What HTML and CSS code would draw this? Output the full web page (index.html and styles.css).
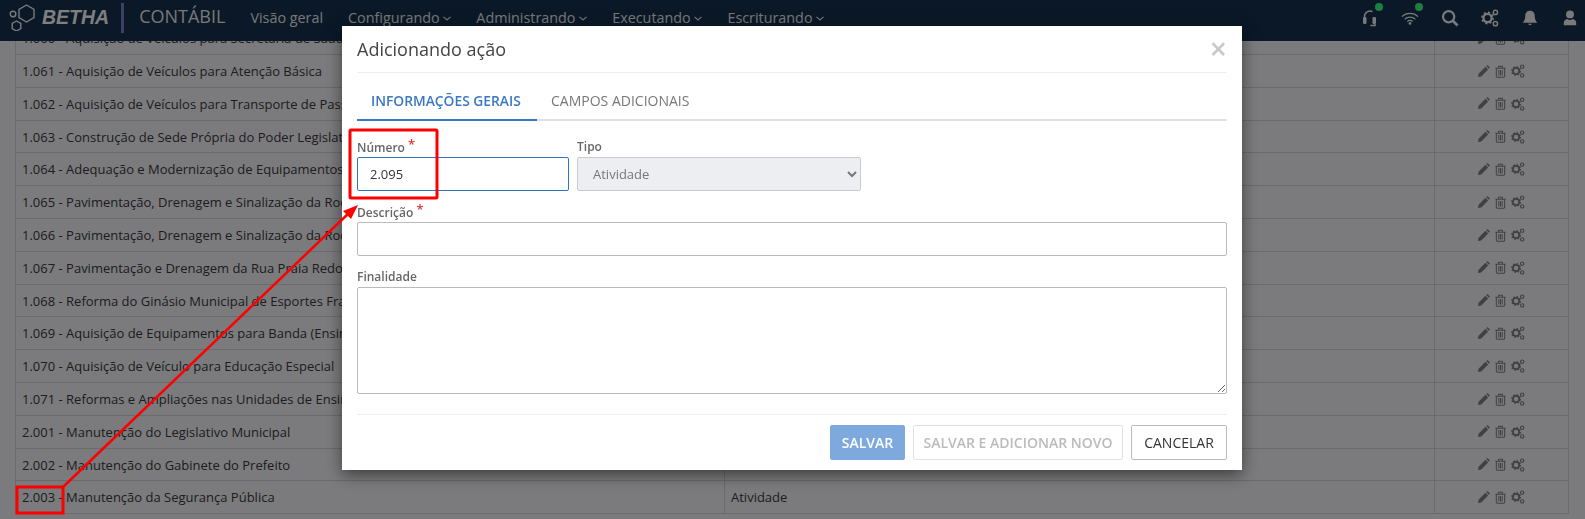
FILE: index.html
```html
<!DOCTYPE html>
<html lang="pt-BR">
<head>
  <meta charset="UTF-8">
  <title>Contábil - Adicionando ação</title>
  <link rel="stylesheet" href="styles.css">
</head>
<body>
  <svg class="icon-defs" width="0" height="0">
    <symbol id="i-pencil" viewBox="0 0 14 14">
      <path d="M1 13l.7-3.6 7.4-7.4 2.9 2.9-7.4 7.4z M9.900 1.200l.8-.7c.4-.3.8-.3 1.100 0l1.700 1.700c.3.3.3.7 0 1l-.8.8z" fill="currentColor"/>
    </symbol>
    <symbol id="i-trash" viewBox="0 0 14 14">
      <path d="M1.500 3.500h11M5 3.200V1.400h4v1.800M2.500 3.500v8.700c0 .6.4 1 1 1h7c.6 0 1-.4 1-1V3.500M5.200 5.500v5.800M7 5.500v5.800M8.800 5.500v5.800" fill="none" stroke="currentColor" stroke-width="1.100"/>
    </symbol>
    <symbol id="i-gears" viewBox="0 0 16 16">
      <circle cx="5.800" cy="8" r="3.600" fill="none" stroke="currentColor" stroke-width="2"/>
      <circle cx="5.800" cy="8" r="5" fill="none" stroke="currentColor" stroke-width="1.400" stroke-dasharray="1.900 2"/>
      <circle cx="12.800" cy="3" r="1.900" fill="none" stroke="currentColor" stroke-width="1.300"/>
      <circle cx="12.800" cy="13" r="1.900" fill="none" stroke="currentColor" stroke-width="1.300"/>
    </symbol>
  </svg>

  <main class="page">
    <div class="list">
      <div class="row"><div class="cell-name">1.060 - Aquisição de Veículos para Secretaria de Saúde</div><div class="cell-type">Atividade</div><div class="cell-actions"><svg><use href="#i-pencil"/></svg><svg><use href="#i-trash"/></svg><svg class="gears"><use href="#i-gears"/></svg></div></div>
      <div class="row"><div class="cell-name">1.061 - Aquisição de Veículos para Atenção Básica</div><div class="cell-type">Atividade</div><div class="cell-actions"><svg><use href="#i-pencil"/></svg><svg><use href="#i-trash"/></svg><svg class="gears"><use href="#i-gears"/></svg></div></div>
      <div class="row"><div class="cell-name">1.062 - Aquisição de Veículos para Transporte de Passageiros</div><div class="cell-type">Atividade</div><div class="cell-actions"><svg><use href="#i-pencil"/></svg><svg><use href="#i-trash"/></svg><svg class="gears"><use href="#i-gears"/></svg></div></div>
      <div class="row"><div class="cell-name">1.063 - Construção de Sede Própria do Poder Legislativo</div><div class="cell-type">Atividade</div><div class="cell-actions"><svg><use href="#i-pencil"/></svg><svg><use href="#i-trash"/></svg><svg class="gears"><use href="#i-gears"/></svg></div></div>
      <div class="row"><div class="cell-name">1.064 - Adequação e Modernização de Equipamentos</div><div class="cell-type">Atividade</div><div class="cell-actions"><svg><use href="#i-pencil"/></svg><svg><use href="#i-trash"/></svg><svg class="gears"><use href="#i-gears"/></svg></div></div>
      <div class="row"><div class="cell-name">1.065 - Pavimentação, Drenagem e Sinalização da Rodovia</div><div class="cell-type">Atividade</div><div class="cell-actions"><svg><use href="#i-pencil"/></svg><svg><use href="#i-trash"/></svg><svg class="gears"><use href="#i-gears"/></svg></div></div>
      <div class="row"><div class="cell-name">1.066 - Pavimentação, Drenagem e Sinalização da Rodovia</div><div class="cell-type">Atividade</div><div class="cell-actions"><svg><use href="#i-pencil"/></svg><svg><use href="#i-trash"/></svg><svg class="gears"><use href="#i-gears"/></svg></div></div>
      <div class="row"><div class="cell-name">1.067 - Pavimentação e Drenagem da Rua Praia Redonda</div><div class="cell-type">Atividade</div><div class="cell-actions"><svg><use href="#i-pencil"/></svg><svg><use href="#i-trash"/></svg><svg class="gears"><use href="#i-gears"/></svg></div></div>
      <div class="row"><div class="cell-name">1.068 - Reforma do Ginásio Municipal de Esportes Francisco</div><div class="cell-type">Atividade</div><div class="cell-actions"><svg><use href="#i-pencil"/></svg><svg><use href="#i-trash"/></svg><svg class="gears"><use href="#i-gears"/></svg></div></div>
      <div class="row"><div class="cell-name">1.069 - Aquisição de Equipamentos para Banda (Ensino)</div><div class="cell-type">Atividade</div><div class="cell-actions"><svg><use href="#i-pencil"/></svg><svg><use href="#i-trash"/></svg><svg class="gears"><use href="#i-gears"/></svg></div></div>
      <div class="row"><div class="cell-name">1.070 - Aquisição de Veículo para Educação Especial</div><div class="cell-type">Atividade</div><div class="cell-actions"><svg><use href="#i-pencil"/></svg><svg><use href="#i-trash"/></svg><svg class="gears"><use href="#i-gears"/></svg></div></div>
      <div class="row"><div class="cell-name">1.071 - Reformas e Ampliações nas Unidades de Ensino</div><div class="cell-type">Atividade</div><div class="cell-actions"><svg><use href="#i-pencil"/></svg><svg><use href="#i-trash"/></svg><svg class="gears"><use href="#i-gears"/></svg></div></div>
      <div class="row"><div class="cell-name">2.001 - Manutenção do Legislativo Municipal</div><div class="cell-type">Atividade</div><div class="cell-actions"><svg><use href="#i-pencil"/></svg><svg><use href="#i-trash"/></svg><svg class="gears"><use href="#i-gears"/></svg></div></div>
      <div class="row"><div class="cell-name">2.002 - Manutenção do Gabinete do Prefeito</div><div class="cell-type">Atividade</div><div class="cell-actions"><svg><use href="#i-pencil"/></svg><svg><use href="#i-trash"/></svg><svg class="gears"><use href="#i-gears"/></svg></div></div>
      <div class="row"><div class="cell-name">2.003 - Manutenção da Segurança Pública</div><div class="cell-type">Atividade</div><div class="cell-actions"><svg><use href="#i-pencil"/></svg><svg><use href="#i-trash"/></svg><svg class="gears"><use href="#i-gears"/></svg></div></div>
    </div>
  </main>

  <header class="navbar">
    <svg class="logo-mark" viewBox="0 0 28 28" width="28" height="28">
      <path d="M17.500 2l7.500 4.300v8.400l-7.500 4.300-7.500-4.300V6.300z M7.500 18l4.300 2.500v5L7.500 28l-4.300-2.500v-5z" fill="none" stroke="currentColor" stroke-width="1.400"/>
      <circle cx="4" cy="11" r="2.800" fill="none" stroke="currentColor" stroke-width="1.400"/>
    </svg>
    <span class="logo-text">BETHA</span>
    <span class="brand">CONTÁBIL</span>
    <nav class="menu">
      <a>Visão geral</a>
      <a>Configurando <svg class="caret" viewBox="0 0 8 5"><path d="M.5.8L4 4 7.500.8"/></svg></a>
      <a>Administrando <svg class="caret" viewBox="0 0 8 5"><path d="M.5.8L4 4 7.500.8"/></svg></a>
      <a>Executando <svg class="caret" viewBox="0 0 8 5"><path d="M.5.8L4 4 7.500.8"/></svg></a>
      <a>Escriturando <svg class="caret" viewBox="0 0 8 5"><path d="M.5.8L4 4 7.500.8"/></svg></a>
    </nav>
    <div class="tools">
      <span class="tool has-dot">
        <svg viewBox="0 0 16 18"><path d="M2.500 11V7.500a5.500 5.500 0 0 1 8-4.900" fill="none" stroke="currentColor" stroke-width="1.500"/><rect x="1" y="8" width="3.500" height="7" rx="1.200" fill="currentColor"/><rect x="10.500" y="8" width="3.500" height="7" rx="1.200" fill="currentColor"/><path d="M13 15v1.500H8.500" fill="none" stroke="currentColor" stroke-width="1.500"/></svg>
      </span>
      <span class="tool has-dot">
        <svg viewBox="0 0 20 16"><path d="M1 6.500a13 13 0 0 1 18 0M4 9.500a8.600 8.600 0 0 1 12 0M7 12a4.300 4.300 0 0 1 6 0" fill="none" stroke="currentColor" stroke-width="1.400"/><circle cx="10" cy="14" r="1.500" fill="currentColor"/></svg>
      </span>
      <span class="tool">
        <svg viewBox="0 0 16 16"><circle cx="6.800" cy="6.800" r="5" fill="none" stroke="currentColor" stroke-width="2"/><path d="M10.500 10.500L14.700 14.700" stroke="currentColor" stroke-width="2.400"/></svg>
      </span>
      <span class="tool"><svg><use href="#i-gears"/></svg></span>
      <span class="tool">
        <svg viewBox="0 0 16 16"><path d="M8 1.500c-2.800 0-4.200 2-4.200 4.500 0 3-1 4.800-2.300 6.300h13C13.200 10.800 12.200 9 12.200 6c0-2.500-1.400-4.500-4.200-4.500zM6.300 13.200a1.800 1.800 0 0 0 3.400 0z" fill="currentColor"/></svg>
      </span>
      <span class="tool">
        <svg viewBox="0 0 16 16"><circle cx="8" cy="4.800" r="3.500" fill="currentColor"/><path d="M2.500 14.500v-2.300c0-2 1.500-3.200 3-3.400a4.200 4.200 0 0 0 5 0c1.500.2 3 1.400 3 3.400v2.300z" fill="currentColor"/></svg>
      </span>
    </div>
  </header>

  <div class="backdrop"></div>

  <div class="modal-wrap">
    <section class="modal">
      <div class="modal-header">
        <h4>Adicionando ação</h4>
        <span class="close">×</span>
      </div>
      <ul class="tabs">
        <li class="active">INFORMAÇÕES GERAIS</li>
        <li>CAMPOS ADICIONAIS</li>
      </ul>
      <form class="form">
        <div class="form-line">
          <div class="field field-number">
            <label>Número <em>*</em></label>
            <input class="control control-focus" type="text" value="2.095">
          </div>
          <div class="field field-type">
            <label>Tipo</label>
            <select class="control" disabled><option>Atividade</option></select>
          </div>
        </div>
        <div class="field">
          <label>Descrição <em>*</em></label>
          <input class="control" type="text">
        </div>
        <div class="field">
          <label>Finalidade</label>
          <textarea class="control control-area"></textarea>
        </div>
      </form>
      <div class="modal-footer">
        <button class="btn btn-primary" type="button">SALVAR</button>
        <button class="btn btn-disabled" type="button">SALVAR E ADICIONAR NOVO</button>
        <button class="btn btn-cancel" type="button">CANCELAR</button>
      </div>
    </section>
  </div>

  <svg class="markup" width="1585" height="519">
    <rect x="350" y="130" width="87" height="68" rx="1" fill="none" stroke="#ff0000" stroke-width="3"/>
    <rect x="17" y="487" width="46" height="26" fill="none" stroke="#ff0000" stroke-width="3"/>
    <path d="M63 487L350 212" stroke="#ff0000" stroke-width="2.500"/>
    <path d="M358 205L343 211 351 219z" fill="#ff0000"/>
  </svg>
</body>
</html>
```

FILE: styles.css
```css
* {
  box-sizing: border-box;
}

html, body {
  height: 100%;
}

body {
  margin: 0;
  overflow: hidden;
  background: #f6f7fa;
  color: #333;
  font-family: 'Open Sans', sans-serif;
  font-size: 13px;
}

.icon-defs {
  position: absolute;
}

/* lista atras do modal */
.page {
  padding: 22.3px 16px 0 15px;
}

.list {
  border-left: 1px solid #d4d6da;
  border-right: 1px solid #d4d6da;
}

.row {
  display: grid;
  grid-template-columns: 708px 710px 1fr;
  height: 32.8px;
  border-bottom: 1px solid #d4d6da;
  line-height: 31px;
  color: #3a3a3a;
}

.cell-name {
  padding: 1px 0 0 6px;
  white-space: nowrap;
  overflow: hidden;
}

.cell-type {
  padding: 1px 0 0 6px;
  border-left: 1px solid #d4d6da;
}

.cell-actions {
  display: flex;
  align-items: center;
  justify-content: center;
  gap: 4px;
  border-left: 1px solid #d4d6da;
  color: #808080;
  padding-right: 2px;
}

.cell-actions svg {
  width: 13px;
  height: 13px;
}

.cell-actions .gears {
  width: 14px;
  height: 14px;
}

/* barra do topo */
.navbar {
  position: fixed;
  top: 0;
  left: 0;
  right: 0;
  height: 41px;
  display: flex;
  align-items: center;
  padding: 0 0 6px 9px;
  background: #14304f;
  color: #fff;
}

.logo-mark {
  flex: none;
  color: #f4f4f4;
  margin-top: -1px;
}

.logo-text {
  margin-left: 5px;
  font-family: 'Liberation Sans', sans-serif;
  font-size: 19.5px;
  font-weight: bold;
  font-style: italic;
}

.brand {
  height: 30px;
  line-height: 27px;
  margin-left: 12px;
  padding-left: 15px;
  border-left: 3px solid #7e7ecc;
  font-size: 18px;
  color: #eee;
}

.menu {
  display: flex;
  gap: 25px;
  margin-left: 25px;
  font-size: 14.35px;
}

.menu a {
  color: #eee;
  white-space: nowrap;
}

.caret {
  width: 8px;
  height: 5px;
  vertical-align: 2px;
  fill: none;
  stroke: currentColor;
  stroke-width: 1.1;
}

.tools {
  display: flex;
  gap: 22px;
  margin-left: auto;
  padding-right: 6px;
}

.tool {
  position: relative;
  width: 18px;
  height: 18px;
  color: #f4f4f4;
}

.tool svg {
  display: block;
  width: 18px;
  height: 18px;
}

.has-dot::after {
  content: '';
  position: absolute;
  top: -6px;
  right: -4px;
  width: 8px;
  height: 8px;
  border-radius: 50%;
  background: #3cff7e;
}

/* modal */
.backdrop {
  position: fixed;
  top: 0;
  left: 0;
  right: 0;
  bottom: 0;
  background: rgba(0, 0, 0, .5);
}

.modal-wrap {
  position: fixed;
  top: 0;
  left: 0;
  right: 0;
  bottom: 0;
  display: flex;
  justify-content: center;
  align-items: flex-start;
  padding: 26px 1px 0 0;
}

.modal {
  width: 900px;
  height: 444px;
  padding: 0 15px;
  background: #fff;
  box-shadow: 0 5px 15px rgba(0, 0, 0, .5);
}

.modal-header {
  display: flex;
  justify-content: space-between;
  align-items: center;
  height: 47px;
  border-bottom: 1px solid #eee;
}

.modal-header h4 {
  margin: 0;
  font-size: 18px;
  font-weight: 400;
  color: #444;
}

.close {
  font-size: 30px;
  line-height: 1;
  font-weight: 600;
  color: #c9c9c9;
  margin-right: 0;
}

.tabs {
  display: flex;
  list-style: none;
  margin: 8px 0 0;
  padding: 0;
  border-bottom: 2px solid #e0e1e6;
  height: 40px;
}

.tabs li {
  height: 40px;
  padding: 11px 14px 0;
  line-height: 18px;
  font-size: 14px;
  color: #777;
  white-space: nowrap;
}

.tabs .active {
  width: 180px;
  border-bottom: 2px solid #3b78c3;
  color: #3b78c3;
  font-size: 13.8px;
  font-weight: 600;
}

.form {
  padding-top: 17px;
}

.form-line {
  display: flex;
  gap: 8px;
}

.field {
  margin-bottom: 12px;
}

.field-number {
  width: 212px;
}

.field-type {
  width: 284px;
}

.field label {
  display: block;
  height: 18px;
  margin-bottom: 1px;
  line-height: 18px;
  font-size: 12px;
  font-weight: 600;
  color: #666;
}

.field label em {
  position: relative;
  top: -3px;
  font-style: normal;
  font-size: 13px;
  color: #e53935;
}

.control {
  display: block;
  width: 100%;
  height: 34px;
  padding: 0 12px;
  border: 1px solid #bbb;
  border-radius: 2px;
  background: #fff;
  color: #333;
  font-family: inherit;
  font-size: 13px;
  outline: none;
}

.control-focus {
  border-color: #2f74c0;
}

select.control {
  padding-left: 11px;
  background: #eceef1;
  border-color: #c9cbd0;
  color: #777;
  opacity: 1;
}

.control-area {
  height: 107px;
  padding: 6px 12px;
  resize: vertical;
}

.modal-footer {
  display: flex;
  justify-content: flex-end;
  gap: 8px;
  margin-top: 20px;
  padding-top: 10px;
  border-top: 1px solid #eee;
}

.btn {
  height: 35px;
  padding: 0;
  border: 1px solid #bbb;
  border-radius: 2px;
  background: #fff;
  color: #333;
  font-family: inherit;
  font-size: 14px;
}

.btn-cancel {
  width: 96px;
}

.btn-primary {
  width: 75px;
  border-color: #7ea9dc;
  background: #7ea9dc;
  color: #fff;
  font-weight: 600;
}

.btn-disabled {
  width: 210px;
  border-color: #e2e2e2;
  color: #bbb;
  font-weight: 600;
}

/* marcacoes em vermelho por cima do print */
.markup {
  position: fixed;
  top: 0;
  left: 0;
}
```
